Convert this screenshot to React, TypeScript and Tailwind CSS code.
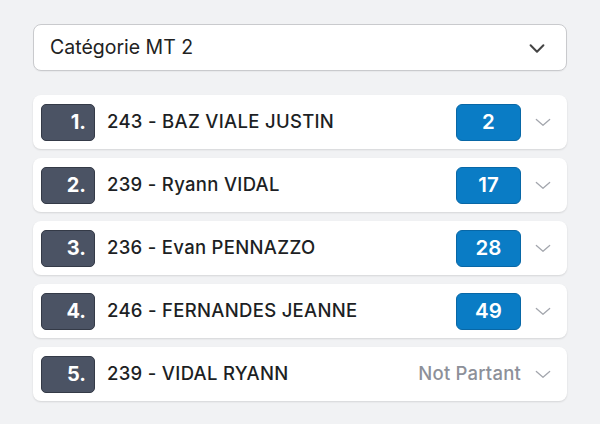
import React from 'react';

const RIDERS = [
  { rank: 1, name: '243 - BAZ VIALE JUSTIN', score: '2' },
  { rank: 2, name: '239 - Ryann VIDAL', score: '17' },
  { rank: 3, name: '236 - Evan PENNAZZO', score: '28' },
  { rank: 4, name: '246 - FERNANDES JEANNE', score: '49' },
  { rank: 5, name: '239 - VIDAL RYANN', score: null },
];

function Chevron({ className, d = 'M5 9l7 7 7-7' }: { className?: string; d?: string }) {
  return (
    <svg viewBox="0 0 24 24" fill="none" stroke="currentColor" strokeWidth={2} strokeLinecap="round" strokeLinejoin="round" className={className}>
      <path d={d} />
    </svg>
  );
}

export default function App() {
  return (
    <div className="w-[600px] h-[424px] bg-[#f1f2f4] px-[33px] pt-[24px] font-['Inter',sans-serif]">
      {/* Category select */}
      <div className="flex h-[47px] items-center justify-between rounded-[8px] border border-[#c9cacd] bg-white pl-[16px] pr-[18px] shadow-[0_1px_1px_rgba(0,0,0,0.04)]">
        <span className="text-[19.5px] text-[#222]">Catégorie MT 2</span>
        <Chevron className="h-[22px] w-[22px] text-[#444] [stroke-width:2.2]" />
      </div>

      {/* Ranking list */}
      <div className="mt-[24px] flex flex-col gap-[9px]">
        {RIDERS.map((r) => (
          <div
            key={r.rank}
            className="flex h-[54px] items-center rounded-[8px] bg-white pl-[8px] pr-[14px] shadow-[0_1px_2px_rgba(0,0,0,0.12)]"
          >
            <div className="flex h-[37px] w-[54px] items-center justify-end rounded-[5px] border border-[#343a47] bg-[#4b5364] pr-[8px] text-[20px] font-bold text-white">
              {r.rank}.
            </div>
            <span className="ml-[12px] flex-1 text-[18.5px] font-medium tracking-[0.3px] text-[#1d1f24]">{r.name}</span>
            {r.score ? (
              <div className="flex h-[37px] w-[65px] items-center justify-center rounded-[6px] border border-[#0867a6] bg-[#0a7cc5] text-[20.5px] font-semibold text-white">
                {r.score}
              </div>
            ) : (
              <span className="text-[18.5px] font-medium tracking-[0.2px] text-[#8d9099]">Not Partant</span>
            )}
            <Chevron d="M4 9l8 7 8-7" className="ml-[12px] h-[20px] w-[20px] text-[#a3a6ad] [stroke-width:1.5]" />
          </div>
        ))}
      </div>
    </div>
  );
}
